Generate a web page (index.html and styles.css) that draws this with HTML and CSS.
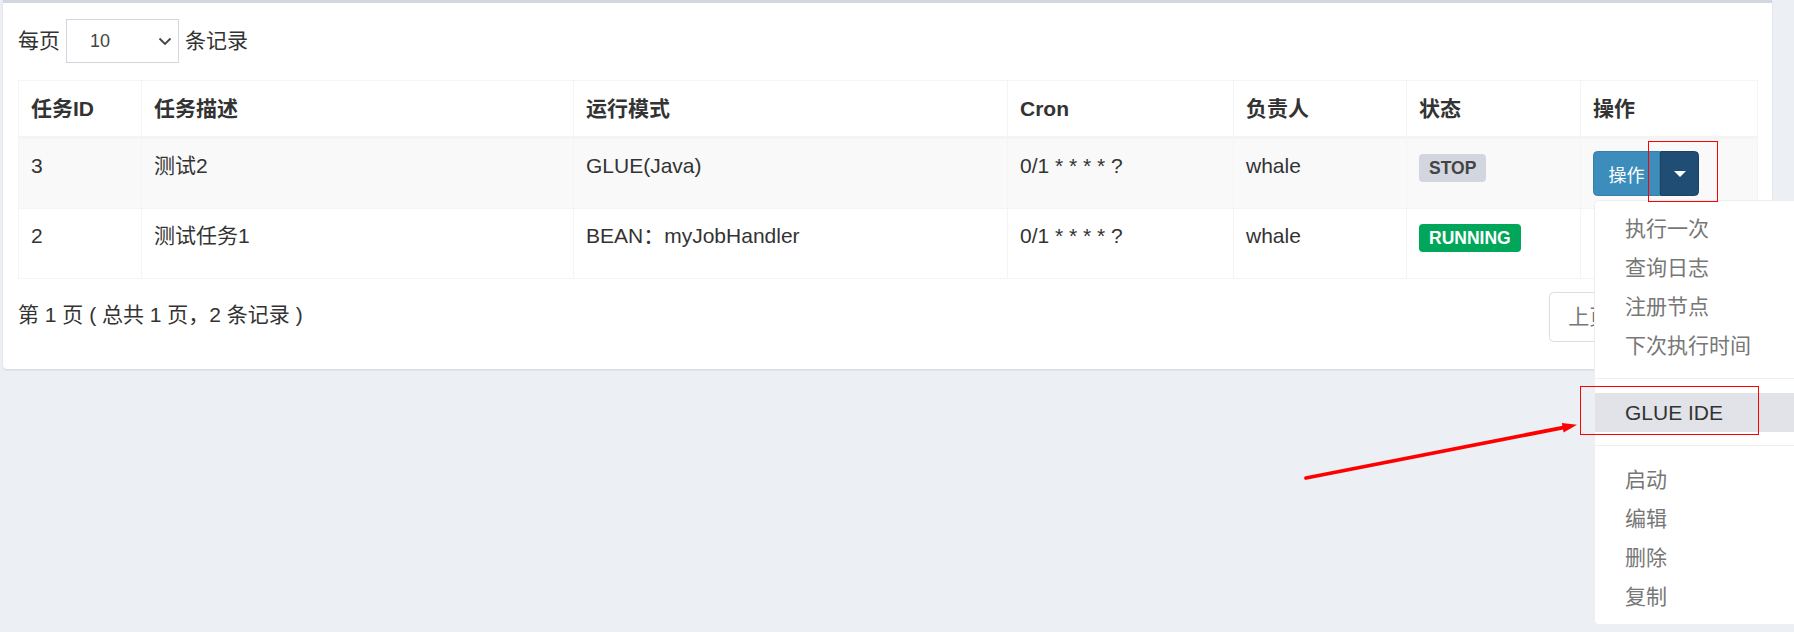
FILE: index.html
```html
<!DOCTYPE html>
<html lang="zh-CN">
<head>
<meta charset="utf-8">
<title>任务管理</title>
<link rel="stylesheet" href="styles.css">
</head>
<body>
<div class="page">
  <section class="box">
    <div class="box-body">
      <div class="length-row">
        <span>每页</span>
        <div class="select">
          <span>10</span>
          <svg class="chevron" width="14" height="9" viewBox="0 0 14 9"><path d="M1.5 1.5 L7 7 L12.5 1.5" fill="none" stroke="#444" stroke-width="1.8"/></svg>
        </div>
        <span>条记录</span>
      </div>

      <table class="job-table">
        <colgroup>
          <col class="c-id"><col class="c-desc"><col class="c-mode"><col class="c-cron"><col class="c-owner"><col class="c-status"><col class="c-op">
        </colgroup>
        <thead>
          <tr><th>任务ID</th><th>任务描述</th><th>运行模式</th><th>Cron</th><th>负责人</th><th>状态</th><th>操作</th></tr>
        </thead>
        <tbody>
          <tr class="odd">
            <td>3</td>
            <td>测试2</td>
            <td>GLUE(Java)</td>
            <td>0/1 * * * * ?</td>
            <td>whale</td>
            <td><span class="label label-default">STOP</span></td>
            <td>
              <div class="btn-group">
                <button class="btn btn-main">操作</button>
                <button class="btn btn-toggle active"><span class="caret"></span></button>
                <ul class="dropdown-menu">
                  <li><a>执行一次</a></li>
                  <li><a>查询日志</a></li>
                  <li><a>注册节点</a></li>
                  <li><a>下次执行时间</a></li>
                  <li class="divider"></li>
                  <li class="hover"><a>GLUE IDE</a></li>
                  <li class="divider"></li>
                  <li><a>启动</a></li>
                  <li><a>编辑</a></li>
                  <li><a>删除</a></li>
                  <li><a>复制</a></li>
                </ul>
              </div>
            </td>
          </tr>
          <tr>
            <td>2</td>
            <td>测试任务1</td>
            <td>BEAN：myJobHandler</td>
            <td>0/1 * * * * ?</td>
            <td>whale</td>
            <td><span class="label label-success">RUNNING</span></td>
            <td></td>
          </tr>
        </tbody>
      </table>

      <div class="table-footer">
        <div class="info">第 1 页 ( 总共 1 页，2 条记录 )</div>
        <ul class="pagination">
          <li class="disabled"><a>上页</a></li>
          <li class="active"><a>1</a></li>
          <li class="disabled"><a>下页</a></li>
        </ul>
      </div>
    </div>
  </section>
</div>

<svg class="annotations" width="1794" height="632" viewBox="0 0 1794 632">
  <rect x="1648.5" y="141.5" width="69" height="60" fill="none" stroke="#f00" stroke-width="1"/>
  <rect x="1580.5" y="386.5" width="178" height="48" fill="none" stroke="#f00" stroke-width="1"/>
  <line x1="1306" y1="478" x2="1563" y2="427.6" stroke="#f00" stroke-width="3.8" stroke-linecap="round"/>
  <polygon points="1577,424.8 1563.6,432.4 1561.8,423" fill="#f00"/>
</svg>
</body>
</html>
```

FILE: styles.css
```css
html, body {
  margin: 0;
  padding: 0;
  width: 1794px;
  height: 632px;
  overflow: hidden;
  background: #ecf0f5;
}

body {
  position: relative;
  font-family: "Liberation Sans", Arial, "Noto Sans CJK SC", sans-serif;
  font-size: 21px;
  color: #333;
}

.page {
  padding: 0 22px 0 3px;
}

.box {
  background: #fff;
  border-top: 3px solid #d2d6de;
  border-radius: 0 0 4px 4px;
  box-shadow: 0 1px 2px rgba(0, 0, 0, 0.12);
}

.box-body {
  padding: 15px 15px 27px;
}

.length-row {
  display: flex;
  align-items: center;
  gap: 6px;
  height: 46px;
  line-height: 30px;
}

.select {
  box-sizing: border-box;
  width: 113px;
  height: 44px;
  border: 1px solid #d2d6de;
  display: flex;
  align-items: center;
  justify-content: space-between;
  padding: 0 6px 0 23px;
  font-size: 18px;
  color: #444;
}

.chevron {
  display: block;
}

.job-table {
  margin-top: 16px;
  width: 1739px;
  table-layout: fixed;
  border-collapse: collapse;
  border: 1px solid #f4f4f4;
}

.c-id { width: 123px; }
.c-desc { width: 432px; }
.c-mode { width: 434px; }
.c-cron { width: 226px; }
.c-owner { width: 173px; }
.c-status { width: 174px; }
.c-op { width: 177px; }

.job-table th,
.job-table td {
  border: 1px solid #f4f4f4;
  text-align: left;
  vertical-align: top;
  line-height: 30px;
  white-space: nowrap;
}

.job-table th {
  padding: 13px 12px 12px;
  font-weight: bold;
  border-bottom: 3px solid #f4f4f4;
}

.job-table td {
  padding: 12px;
  height: 45px;
}

.job-table tr.odd td {
  background: #f9f9f9;
}

.label {
  display: inline-block;
  vertical-align: top;
  margin-top: 3px;
  height: 28px;
  line-height: 28px;
  padding: 0 10px;
  font-size: 17.5px;
  font-weight: bold;
  border-radius: 4px;
}

.label-default {
  background: #d2d6de;
  color: #444;
}

.label-success {
  background: #00a65a;
  color: #fff;
}

.btn-group {
  position: relative;
  display: inline-flex;
  vertical-align: top;
}

.btn {
  box-sizing: border-box;
  height: 45px;
  margin: 0;
  padding: 0;
  display: flex;
  align-items: center;
  justify-content: center;
  font-family: "Liberation Sans", Arial, "Noto Sans CJK SC", sans-serif;
  font-size: 18px;
  color: #fff;
  background: #3c8dbc;
  border: 1px solid #367fa9;
}

.btn-main {
  width: 67px;
  border-radius: 4.5px 0 0 4.5px;
}

.btn-toggle {
  width: 39px;
  border-left-color: #2e6f96;
  border-radius: 0 4.5px 4.5px 0;
}

.btn-toggle.active {
  background: #204d74;
  border-color: #1b4163;
}

.caret {
  display: block;
  width: 0;
  height: 0;
  border-top: 6px solid #fff;
  border-left: 6px solid transparent;
  border-right: 6px solid transparent;
}

.dropdown-menu {
  position: absolute;
  top: calc(100% + 4px);
  left: 1px;
  z-index: 10;
  width: 240px;
  margin: 0;
  padding: 8px 0;
  list-style: none;
  background: #fff;
  border: 1px solid #eee;
  border-radius: 4.5px;
}

.dropdown-menu li a {
  display: block;
  padding: 0 30px;
  height: 39px;
  line-height: 39px;
  color: #777;
  white-space: nowrap;
}

.dropdown-menu li.hover a {
  background: #e1e3e9;
  color: #333;
}

.dropdown-menu .divider {
  height: 1px;
  margin: 13px 0 14px;
  background: #eee;
}

.table-footer {
  margin-top: 9px;
  display: flex;
  justify-content: space-between;
  align-items: flex-start;
}

.info {
  padding-top: 12px;
  line-height: 30px;
}

.pagination {
  display: flex;
  margin: 4px 0 0;
  padding: 0;
  list-style: none;
}

.pagination a {
  display: block;
  padding: 9px 18px;
  line-height: 30px;
  border: 1px solid #ddd;
  margin-left: -1px;
  background: #fff;
  color: #777;
}

.pagination li:first-child a {
  margin-left: 0;
  border-radius: 4.5px 0 0 4.5px;
}

.pagination li:last-child a {
  border-radius: 0 4.5px 4.5px 0;
}

.pagination li.active a {
  background: #3c8dbc;
  border-color: #367fa9;
  color: #fff;
}

.annotations {
  position: absolute;
  left: 0;
  top: 0;
  z-index: 20;
  pointer-events: none;
}
```
